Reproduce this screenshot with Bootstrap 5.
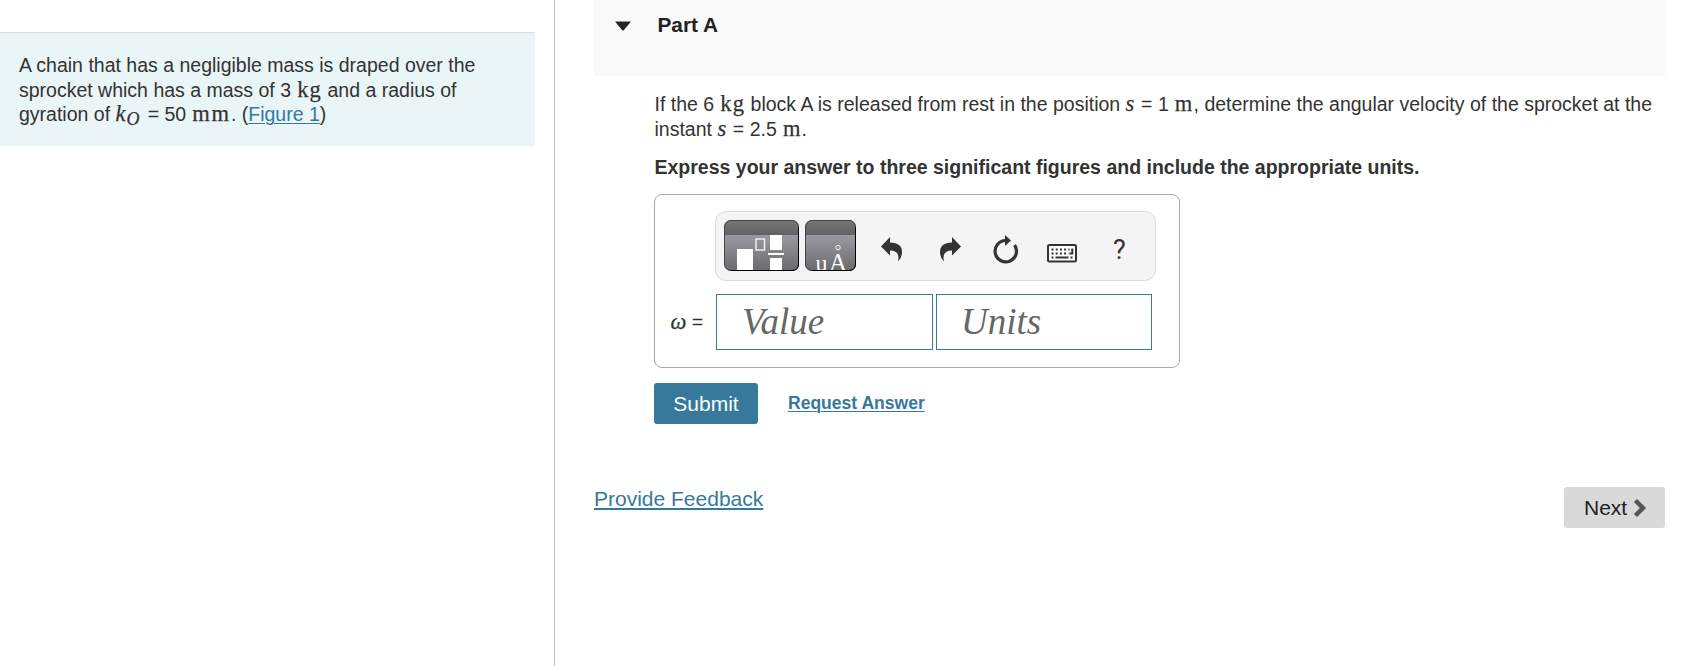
<!DOCTYPE html>
<html lang="en">
<head>
<meta charset="utf-8">
<title>Part A</title>
<link rel="stylesheet" href="https://cdn.jsdelivr.net/npm/bootstrap@5.3.0/dist/css/bootstrap.min.css">
<style>
body{font-family:"Liberation Sans",Arial,sans-serif;font-size:19.5px;line-height:24.5px;color:#333;height:666px;overflow:hidden;background:#fff}
a{color:#36799b;text-underline-offset:2px;text-decoration-thickness:1px}
.side-pane{width:555px;border-right:1px solid #b8c6d0;padding-top:32px}
.intro{width:535px;height:114px;background:#eaf5f8;border-top:1px solid #d9dfde;padding:20px 0 0 19px}
.ln{white-space:nowrap;height:24.5px}
.mr,.mi{font-family:"Liberation Serif",serif;font-size:22.5px;line-height:0}
.mr{letter-spacing:1.2px;margin-left:.7px;-webkit-text-stroke:.25px #333}
.mr.wide{letter-spacing:1.8px}
.mi{font-style:italic;margin-right:1.3px;-webkit-text-stroke:.25px #333}
.mi sub{font-size:18px;bottom:-.2em;line-height:0;margin:0 1.5px 0 1px}
.part-head{height:76px;background:#f9f9f9;padding:12px 0 0 21px}
.part-title{font-size:20.8px;color:#222;margin:0 0 0 26.5px;line-height:26px}
.main-pane{padding:0 17px 0 39px}
.part-body{padding:16px 0 0 60.5px}
.instructions{margin-top:13.5px}
.answer-box{width:526px;height:174px;border:1px solid #a9a9a9;border-radius:8px;margin:15px 0 15px -.5px;padding:16px 0 0 15px}
.tools{width:441px;height:70px;border:1px solid #dcdcdc;border-radius:11px;background:#f4f4f4;margin-left:45px;padding:8px 0 0 8px}
.tools svg{flex:none;display:block}
.answer-row{margin-top:13px}
.answer-label{width:46px;line-height:57px;padding-left:.5px}
.answer-label .mi{margin-right:0}
.field{width:217px;height:56px;border:1px solid #36799b;padding:0 0 0 25px;font:italic 37px/53px "Liberation Serif",serif;color:#666}
.field + .field{width:216px;margin-left:3px;padding-left:24px}
.help{font:27px/32px Roboto,sans-serif;margin:14px 0 0 36px}
.btn-submit,.btn-submit:hover{width:104px;height:41px;background:#36799b;color:#fff;font-size:21px;border-radius:3px;padding:1px 0 0;margin-left:-.5px}
.request{font-size:17.55px;margin-left:30px}
.page-foot{margin-top:63px}
.feedback{font-size:21px;text-decoration-thickness:2px}
.btn-next{width:101px;height:41px;background:#d9d9d9;color:#222;font-size:21px;border-radius:3px;padding:1px 0 0 19px}
</style>
</head>
<body class="d-flex">
<aside class="side-pane flex-shrink-0">
  <div class="intro">
    <div class="ln">A chain that has a negligible mass is draped over the</div>
    <div class="ln">sprocket which has a mass of 3 <span class="mr">kg</span> and a radius of</div>
    <div class="ln">gyration of <span class="mi">k<sub>O</sub></span> = 50 <span class="mr wide">mm</span>. (<a href="#">Figure 1</a>)</div>
  </div>
</aside>
<main class="main-pane flex-grow-1">
  <div class="part-head d-flex">
    <svg width="16" height="26"><path d="M0 9.500h16l-7 8.500q-1 1-2 0z" fill="#222"/></svg>
    <h2 class="part-title fw-bold">Part A</h2>
  </div>
  <div class="part-body">
    <div class="ln">If the 6 <span class="mr">kg</span> block A is released from rest in the position <span class="mi">s</span> = 1 <span class="mr">m</span>, determine the angular velocity of the sprocket at the</div>
    <div class="ln">instant <span class="mi">s</span> = 2.5 <span class="mr">m</span>.</div>
    <div class="ln fw-bold instructions">Express your answer to three significant figures and include the appropriate units.</div>
    <div class="answer-box">
      <div class="tools d-flex align-items-start">
        <svg width="75" height="51" viewBox="0 0 75 51">
          <defs>
            <linearGradient id="face" x2="0" y2="1"><stop stop-color="#9a99a2"/><stop offset="1" stop-color="#6b6b6d"/></linearGradient>
            <linearGradient id="lid" x2="0" y2="1"><stop stop-color="#777"/><stop offset="1" stop-color="#626262"/></linearGradient>
            <clipPath id="c1"><rect width="75" height="51" rx="7"/></clipPath>
            <clipPath id="c2"><rect width="51" height="51" rx="7"/></clipPath>
          </defs>
          <g clip-path="url(#c1)">
            <path fill="url(#face)" d="M0 15h75v36H0z"/><path fill="url(#lid)" d="M0 0h75v15H0z"/>
            <path fill="#fff" d="M13 29h16v22H13zM46 15h12v15H46zM44 33h16v2H44zM46 38h12v13H46z"/>
            <path fill="none" stroke="#eee" stroke-width="1.500" d="M32 19h8.500v11H32z"/>
          </g>
          <rect x=".5" y=".5" width="74" height="50" rx="6.500" fill="none" stroke="#444"/>
          <path d="M74.500 7v37q0 6.500-6.500 6.500H7" fill="none" stroke="#000"/>
        </svg>
        <svg width="51" height="51" viewBox="0 0 51 51" style="margin-left:6px">
          <g clip-path="url(#c2)">
            <path fill="url(#face)" d="M0 15h51v36H0z"/><path fill="url(#lid)" d="M0 0h51v15H0z"/>
            <text x="10.500" y="51" font-family="Liberation Serif,serif" font-size="24" fill="#fff">u</text>
            <text x="24" y="50.500" font-family="Liberation Serif,serif" font-size="25" fill="#fff">A</text>
            <circle cx="33" cy="27.500" r="2.200" fill="none" stroke="#fff"/>
          </g>
          <rect x=".5" y=".5" width="50" height="50" rx="6.500" fill="none" stroke="#444"/>
          <path d="M50.500 7v37q0 6.500-6.500 6.500H7" fill="none" stroke="#000"/>
        </svg>
        <svg width="21" height="25" viewBox="0 0 21 25" style="margin:17px 0 0 25px"><path id="arrow" fill="#333" d="M0 9.500 9 0v5.500C17 5.500 21 9 21 15q0 6-4 9.500Q19.500 13.500 9 13.500v5z"/></svg>
        <svg width="21" height="25" viewBox="0 0 21 25" style="margin:17px 0 0 38px"><use href="#arrow" transform="translate(21) scale(-1 1)"/></svg>
        <svg width="26" height="29" viewBox="0 0 26 29" style="margin:15px 0 0 32px"><path fill="none" stroke="#333" stroke-width="3.200" d="M12.500 5.500A10.700 10.700 0 1 0 21.500 10"/><path fill="#333" d="m12 0 6 5.500-6 5.500z"/></svg>
        <svg width="30" height="19" viewBox="0 0 30 19" style="margin:24px 0 0 28px"><rect x="1" y="1" width="28" height="16.500" rx="1.500" fill="#fff" stroke="#333" stroke-width="2"/><path stroke="#333" stroke-width="2" stroke-dasharray="2 2.200" fill="none" d="M4.500 5.500h18M4.500 9.500h17M4.500 13.500h2M23.500 13.500h2"/><path stroke="#333" stroke-width="2" fill="none" d="M8.500 13.500h13M25.300 4.500v5h-3"/></svg>
        <span class="help">?</span>
      </div>
      <div class="d-flex answer-row">
        <div class="answer-label"><span class="mi">ω</span> =</div>
        <div class="field">Value</div>
        <div class="field">Units</div>
      </div>
    </div>
    <div class="d-flex align-items-center">
      <button class="btn btn-submit">Submit</button>
      <a class="request fw-bold" href="#">Request Answer</a>
    </div>
  </div>
  <div class="page-foot d-flex justify-content-between align-items-start">
    <a class="feedback" href="#">Provide Feedback</a>
    <button class="btn btn-next d-flex align-items-center">Next<svg width="14" height="20" viewBox="0 0 14 20" style="margin:-1px 0 0 5.500px"><path d="m2.500 2.500 7.500 7.500-7.500 7.500" fill="none" stroke="#555" stroke-width="4.500"/></svg></button>
  </div>
</main>
<script src="https://cdn.jsdelivr.net/npm/bootstrap@5.3.0/dist/js/bootstrap.bundle.min.js"></script>
</body>
</html>
